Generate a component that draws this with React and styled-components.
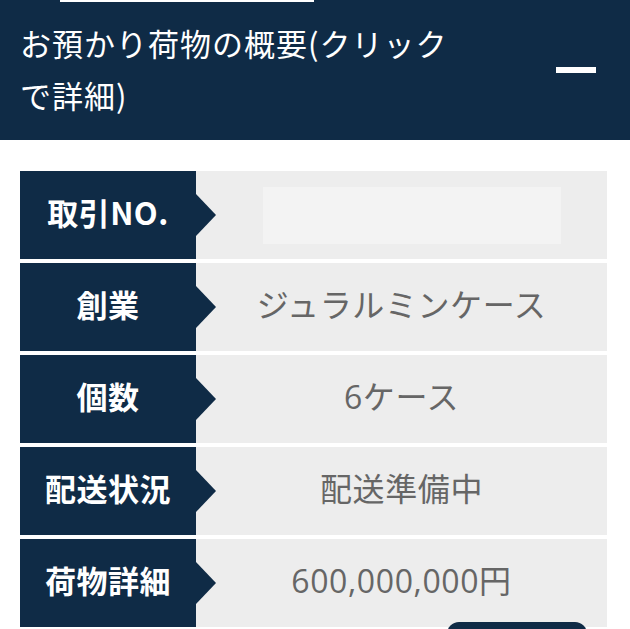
import React from "react";
import styled, { createGlobalStyle } from "styled-components";

const GlobalStyle = createGlobalStyle`
  html, body {
    margin: 0;
    padding: 0;
    background: #fff;
  }
  body {
    font-family: "Open Sans", "Noto Sans CJK JP", sans-serif;
  }
  * {
    box-sizing: border-box;
  }
`;

const NAVY = "#0f2b46";

// ヘッダー部分
const Header = styled.header`
  position: relative;
  background-color: ${NAVY};
  display: flex;
  align-items: flex-start;
  justify-content: space-between;
  padding: 17px 34px 19px 20px;
`;

const TopBar = styled.div`
  position: absolute;
  top: 0;
  left: 60px;
  width: 254px;
  height: 2px;
  background: #fff;
`;

const Title = styled.h2`
  margin: 0;
  width: 448px;
  font-size: 31px;
  font-weight: 400;
  line-height: 52px;
  letter-spacing: 1px;
  color: #fff;
  font-family: "Noto Sans CJK JP", sans-serif;
`;

const ToggleIcon = styled.span`
  display: block;
  width: 40px;
  height: 6px;
  margin-top: 50px;
  background: #fff;
`;

// テーブル部分
const Body = styled.div`
  padding: 31px 23px 0 20px;
`;

const Table = styled.div`
  display: flex;
  flex-direction: column;
  gap: 4px;
`;

const Row = styled.div`
  display: flex;
  height: 88px;
`;

const Label = styled.div`
  position: relative;
  width: 176px;
  flex-shrink: 0;
  background: ${NAVY};
  color: #fff;
  display: flex;
  align-items: center;
  justify-content: center;
  padding-bottom: 7px;
  font-size: 31px;
  font-weight: 700;
  letter-spacing: 0.5px;
  font-family: "Noto Sans CJK JP", sans-serif;

  &::after {
    content: "";
    position: absolute;
    right: -20px;
    top: 50%;
    transform: translateY(-50%);
    border-top: 21px solid transparent;
    border-bottom: 21px solid transparent;
    border-left: 20px solid ${NAVY};
  }
`;

const Value = styled.div`
  flex: 1;
  background: #ededed;
  display: flex;
  align-items: center;
  justify-content: center;
  padding-bottom: ${(p) => (p.$box ? "0" : "8px")};
  color: #666;
  font-size: 32px;
  letter-spacing: 0.6px;
  font-family: "Open Sans", "Noto Sans CJK JP", sans-serif;
`;

const NumberBox = styled.div`
  width: 298px;
  height: 57px;
  margin-left: 20px;
  background: #f3f3f3;
`;

const ButtonRow = styled.div`
  display: flex;
  justify-content: flex-end;
  margin-top: -5px;
  padding-right: 20px;
`;

const DetailButton = styled.button`
  width: 140px;
  height: 48px;
  border: none;
  border-radius: 12px;
  background: ${NAVY};
  cursor: pointer;
`;

const rows = [
  { label: "創業", value: "ジュラルミンケース" },
  { label: "個数", value: "6ケース" },
  { label: "配送状況", value: "配送準備中" },
  { label: "荷物詳細", value: "600,000,000円" },
];

export default function App() {
  return (
    <>
      <GlobalStyle />
      <Header>
        <TopBar />
        <Title>お預かり荷物の概要(クリックで詳細)</Title>
        <ToggleIcon />
      </Header>
      <Body>
        <Table>
          <Row>
            <Label>取引NO.</Label>
            <Value $box>
              <NumberBox />
            </Value>
          </Row>
          {rows.map((r) => (
            <Row key={r.label}>
              <Label>{r.label}</Label>
              <Value>{r.value}</Value>
            </Row>
          ))}
        </Table>
        <ButtonRow>
          <DetailButton />
        </ButtonRow>
      </Body>
    </>
  );
}
